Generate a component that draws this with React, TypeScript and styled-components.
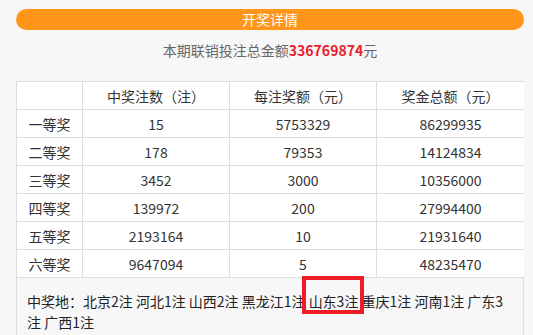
import React, { FC } from "react";
import styled, { createGlobalStyle } from "styled-components";

const GlobalStyle = createGlobalStyle`
	html, body {
		margin: 0;
		padding: 0;
		background: #f7f7f7;
		font-family: "Noto Sans CJK SC", "Noto Sans", sans-serif;
		font-size: 14px;
		color: #333;
	}
`;

// styled components
const Wrapper = styled.section`
	margin: 0 9px 0 16px;
	padding-top: 9px;
	height: 326px;
	overflow: hidden;
`;

const TitleBar = styled.div`
	height: 21px;
	line-height: 21px;
	border-radius: 11px;
	background: #ff961a;
	color: #fff;
	text-align: center;
	font-size: 14px;
`;

const TotalLine = styled.p`
	margin: 10px 0 0;
	line-height: 20px;
	text-align: center;
	color: #666;
`;

const Amount = styled.span`
	color: #e8202a;
	font-weight: bold;
`;

const Table = styled.table`
	margin-top: 21px;
	width: 508px;
	border-collapse: collapse;
	table-layout: fixed;
	background: #fff;
`;

const Cell = styled.td`
	height: 27px;
	padding: 0;
	border: 1px solid #ddd;
	text-align: center;
	color: #333;
`;

const Places = styled.div`
	width: 508px;
	box-sizing: border-box;
	border: 1px solid #ddd;
	border-top: none;
	padding: 13px 10px 0;
	line-height: 21px;
	height: 70px;
	color: #222;
	word-break: break-all;
`;

const Marked = styled.span`
	position: relative;

	&::after {
		content: "";
		position: absolute;
		left: -7px;
		right: -6px;
		top: -15px;
		bottom: -3px;
		border: 4px solid #ee1c25;
	}
`;

const headers = ["", "中奖注数（注）", "每注奖额（元）", "奖金总额（元）"];

const rows = [
	["一等奖", "15", "5753329", "86299935"],
	["二等奖", "178", "79353", "14124834"],
	["三等奖", "3452", "3000", "10356000"],
	["四等奖", "139972", "200", "27994400"],
	["五等奖", "2193164", "10", "21931640"],
	["六等奖", "9647094", "5", "48235470"],
];

const App: FC = () => {
	return (
		<>
			<GlobalStyle />
			<Wrapper>
				<TitleBar>开奖详情</TitleBar>
				<TotalLine>
					本期联销投注总金额<Amount>336769874</Amount>元
				</TotalLine>
				<Table>
					<colgroup>
						<col style={{ width: 66 }} />
						<col style={{ width: 147 }} />
						<col style={{ width: 147 }} />
						<col style={{ width: 148 }} />
					</colgroup>
					<tbody>
						<tr>
							{headers.map((h, i) => (
								<Cell key={i}>{h}</Cell>
							))}
						</tr>
						{rows.map((r) => (
							<tr key={r[0]}>
								{r.map((v, i) => (
									<Cell key={i}>{v}</Cell>
								))}
							</tr>
						))}
					</tbody>
				</Table>
				<Places>
					中奖地：北京2注 河北1注 山西2注 黑龙江1注 <Marked>山东3注</Marked> 重庆1注 河南1注 广东3注 广西1注
				</Places>
			</Wrapper>
		</>
	);
};

export default App;
